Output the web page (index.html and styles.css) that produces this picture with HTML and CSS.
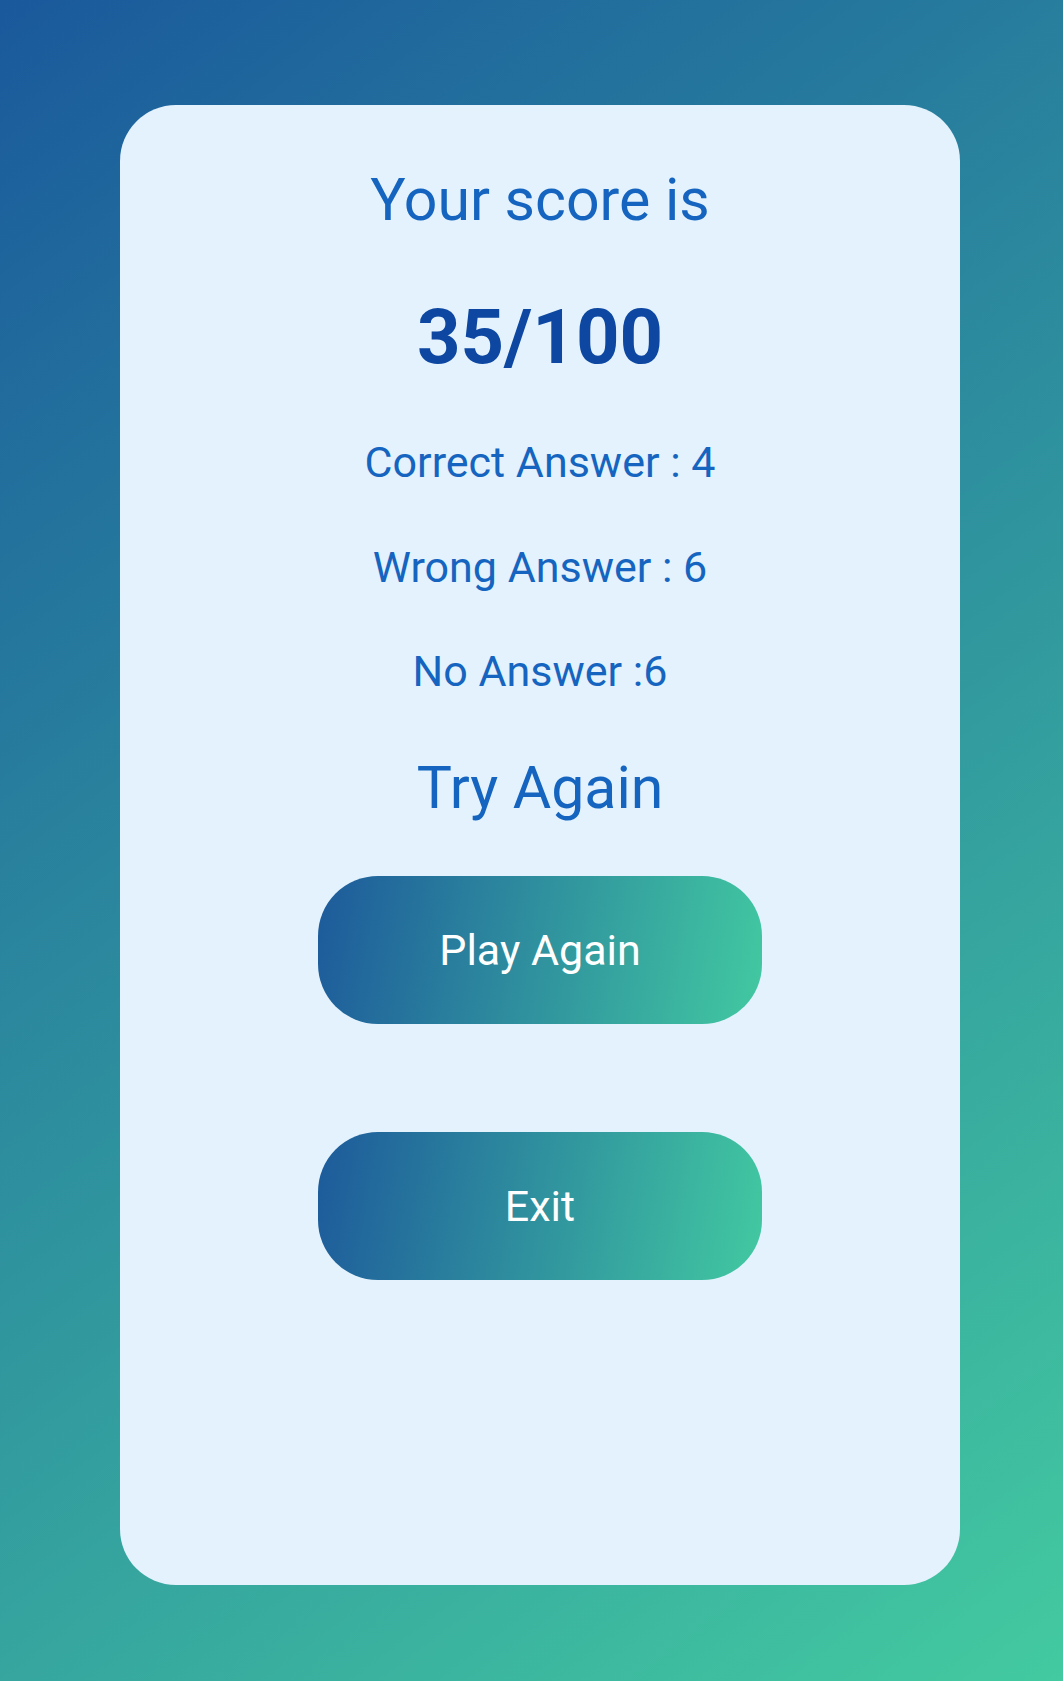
FILE: index.html
```html
<!DOCTYPE html>
<html lang="en">
<head>
<meta charset="utf-8">
<title>Result</title>
<link rel="stylesheet" href="styles.css">
</head>
<body>
<main class="screen">
  <section class="card">
    <h1 class="title">Your score is</h1>
    <div class="score">35/100</div>
    <p class="stat stat-first">Correct Answer : 4</p>
    <p class="stat">Wrong Answer : 6</p>
    <p class="stat stat-last">No Answer :6</p>
    <h2 class="retry">Try Again</h2>
    <button class="btn btn-play">Play Again</button>
    <button class="btn btn-exit">Exit</button>
  </section>
</main>
</body>
</html>
```
FILE: styles.css
```css
html, body {
  margin: 0;
  padding: 0;
}
body {
  font-family: Roboto, "Liberation Sans", sans-serif;
}
.screen {
  width: 1063px;
  height: 1681px;
  box-sizing: border-box;
  padding: 105px 103px 0 120px;
  background: linear-gradient(143deg, #1a599c 0%, #43caa0 100%);
}
.card {
  width: 840px;
  height: 1480px;
  box-sizing: border-box;
  padding-top: 65px;
  background: #e3f2fd;
  border-radius: 56px;
  display: flex;
  flex-direction: column;
  align-items: center;
}
.title, .score, .stat, .retry {
  margin: 0;
  line-height: 1;
  color: #1565c0;
  font-weight: 400;
}
.title {
  font-size: 59px;
}
.score {
  margin-top: 70px;
  font-size: 76px;
  font-weight: 700;
  color: #0d47a1;
}
.stat {
  margin-top: 62px;
  font-size: 43px;
}
.stat-first {
  margin-top: 66px;
}
.stat-last {
  margin-top: 61px;
}
.retry {
  margin-top: 65px;
  font-size: 59px;
}
.btn {
  width: 444px;
  height: 148px;
  border: none;
  border-radius: 60px;
  background: linear-gradient(100deg, #1d5a9b 0%, #42c9a1 100%);
  color: #ffffff;
  font-family: Roboto, "Liberation Sans", sans-serif;
  font-size: 43px;
  padding: 0;
}
.btn-play {
  margin-top: 59px;
}
.btn-exit {
  margin-top: 108px;
}
```
